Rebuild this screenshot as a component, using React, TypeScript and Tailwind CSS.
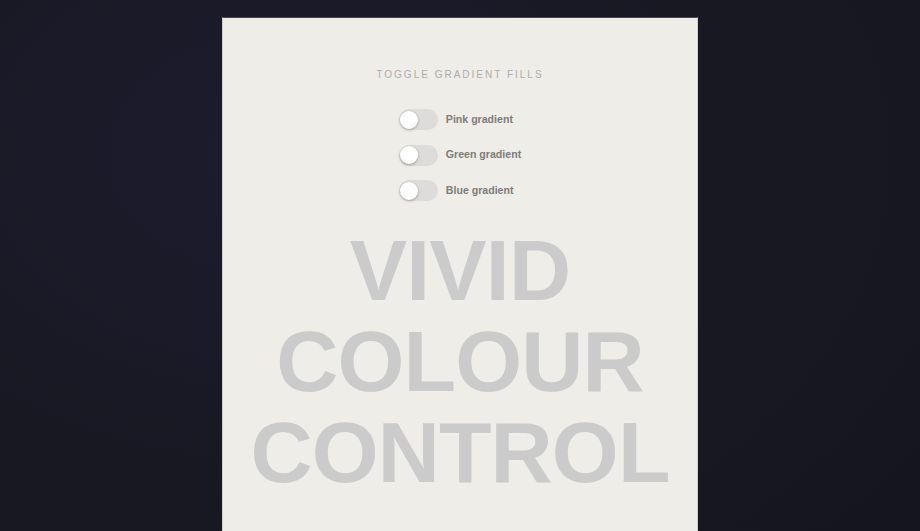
import React, { useState } from 'react';

const options = [
  { id: 'pink', label: 'Pink gradient' },
  { id: 'green', label: 'Green gradient' },
  { id: 'blue', label: 'Blue gradient' },
];

function Toggle({ on, onChange }: { on: boolean; onChange: () => void }) {
  return (
    <button
      onClick={onChange}
      className={`relative h-[21px] w-[39px] shrink-0 rounded-full transition-colors ${
        on ? 'bg-[#9a9a9a]' : 'bg-[#dddcda]'
      }`}
    >
      <span
        className={`absolute top-[1.5px] h-[18px] w-[18px] rounded-full bg-white shadow-[0_1px_3px_rgba(0,0,0,0.3)] transition-all ${
          on ? 'left-[19.5px]' : 'left-[1.5px]'
        }`}
      />
    </button>
  );
}

export default function App() {
  const [active, setActive] = useState<Record<string, boolean>>({});

  return (
    <div className="min-h-screen w-full overflow-hidden bg-[radial-gradient(ellipse_at_30%_25%,#1c1c2e_0%,#17171f_70%,#14141c_100%)] pt-[17px] font-['Liberation_Sans',Arial,sans-serif]">
      <div className="mx-auto flex min-h-[600px] w-[476px] flex-col items-center border-x border-t border-x-[#d2cfca] border-t-[#45454c] bg-[#efede8] pt-[49px]">
        {/* Controls */}
        <p className="text-[10px] leading-[15px] tracking-[0.2em] text-[#acacac]">
          TOGGLE GRADIENT FILLS
        </p>
        <div className="mt-[27px] flex flex-col items-start gap-[14.5px]">
          {options.map((o) => (
            <div key={o.id} className="flex h-[21px] items-center gap-[8px]">
              <Toggle
                on={!!active[o.id]}
                onChange={() => setActive((a) => ({ ...a, [o.id]: !a[o.id] }))}
              />
              <span className="text-[10.6px] font-bold text-[#7c7c7c]">{o.label}</span>
            </div>
          ))}
        </div>

        {/* Headline */}
        <h1 className="mt-[24px] text-center text-[86px] font-bold leading-[91px] tracking-[-0.01em] text-[#cbcbcb]">
          VIVID
          <br />
          COLOUR
          <br />
          CONTROL
        </h1>
      </div>
    </div>
  );
}
